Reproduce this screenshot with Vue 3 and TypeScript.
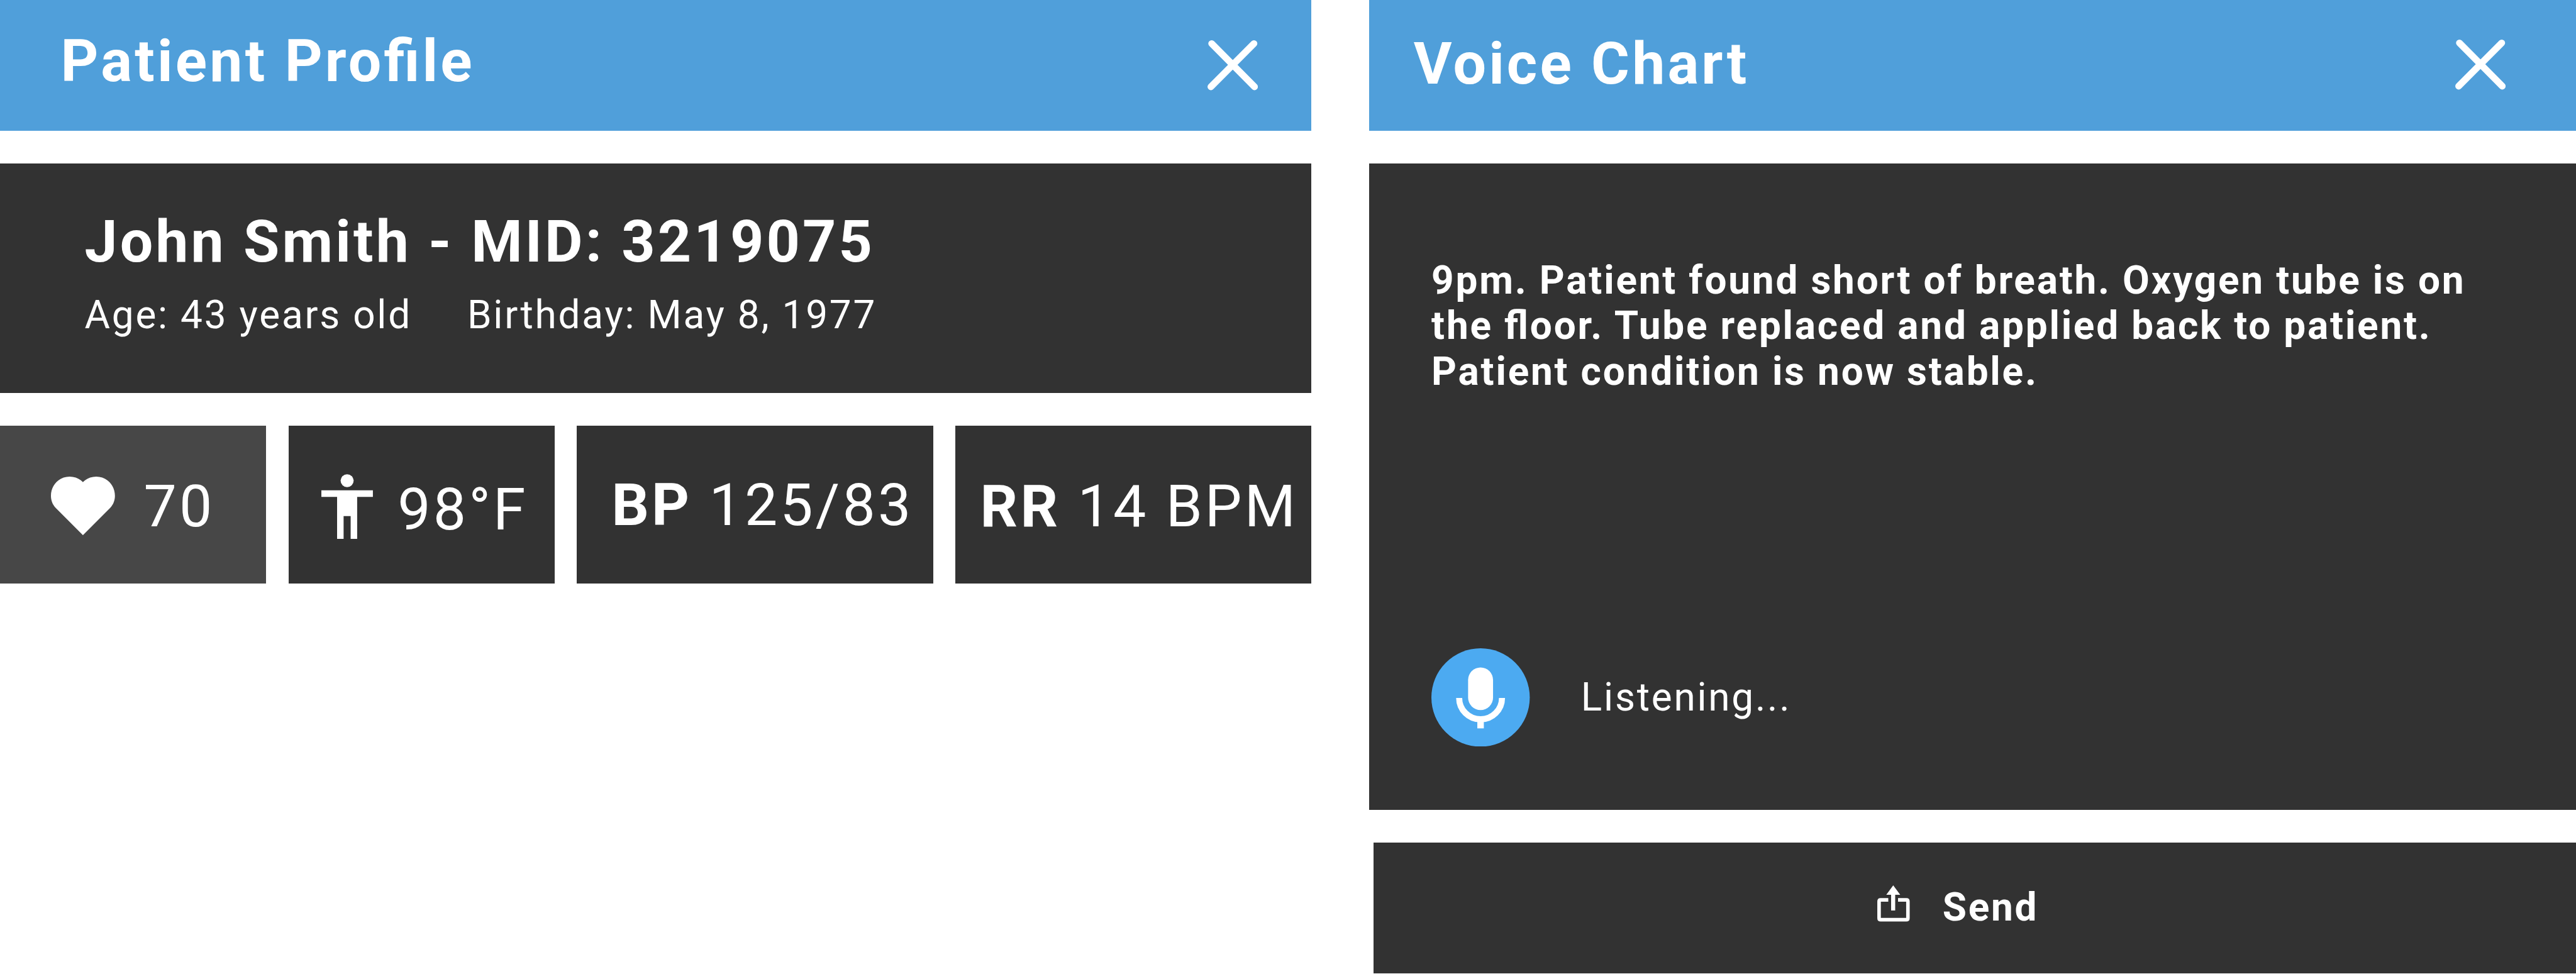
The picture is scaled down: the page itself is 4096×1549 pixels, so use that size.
<script setup lang="ts">
interface Vital {
  id: string
  label?: string
  value: string
}

const patient = {
  name: 'John Smith',
  mid: '3219075',
  age: '43 years old',
  birthday: 'May 8, 1977',
}

const vitals: Vital[] = [
  { id: 'heart', value: '70' },
  { id: 'temp', value: '98°F' },
  { id: 'bp', label: 'BP', value: '125/83' },
  { id: 'rr', label: 'RR', value: '14 BPM' },
]

const noteLines: string[] = [
  '9pm. Patient found short of breath. Oxygen tube is on',
  'the floor. Tube replaced and applied back to patient.',
  'Patient condition is now stable.',
]
</script>

<template>
  <main class="screen">
    <section class="panel profile">
      <header class="bar">
        <h1 class="heading">Patient Profile</h1>
        <svg class="close" viewBox="0 0 93 94">
          <path d="M7.7 7.3 86.7 87M85.7 7.3 6.3 87" />
        </svg>
      </header>

      <div class="card identity">
        <h2 class="heading">{{ patient.name }} - MID: {{ patient.mid }}</h2>
        <div class="facts">
          <span>Age: {{ patient.age }}</span>
          <span>Birthday: {{ patient.birthday }}</span>
        </div>
      </div>

      <div class="vitals">
        <div v-for="v in vitals" :key="v.id" class="vital" :class="v.id">
          <svg v-if="v.id === 'heart'" class="heart-icon" viewBox="0 0 118 108">
            <path d="M59 108 8.5 57.5C3 51.5 0 44 0 35.5 0 15.5 15 0 34.5 0 44 0 52.8 3.5 59 10.2 65.2 3.5 74 0 83.5 0 103 0 118 15.5 118 35.5 118 44 115 51.5 109.5 57.5Z" />
          </svg>
          <svg v-else-if="v.id === 'temp'" class="person-icon" viewBox="0 0 95 120">
            <circle cx="47.5" cy="12.2" r="12" />
            <path d="M0 29.8H95V42H66V119.6H54V77.5H41V119.6H29V42H0Z" />
          </svg>
          <span class="reading"><b v-if="v.label">{{ v.label }}&nbsp;</b>{{ v.value }}</span>
        </div>
      </div>
    </section>

    <section class="panel voice">
      <header class="bar">
        <h1 class="heading">Voice Chart</h1>
        <svg class="close" viewBox="0 0 93 94">
          <path d="M7.7 7.3 86.7 87M85.7 7.3 6.3 87" />
        </svg>
      </header>

      <div class="card chart">
        <p class="note">
          <span v-for="line in noteLines" :key="line">{{ line }}</span>
        </p>
        <div class="listen">
          <svg class="mic" viewBox="0 0 181.4 181.4">
            <circle class="disc" cx="90.7" cy="90.7" r="90.7" />
            <rect x="67.7" y="35.3" width="46" height="78.7" rx="23" />
            <path class="cradle" d="M51.2 91.5a39.5 39.5 0 0 0 79 0" />
            <rect x="84.7" y="130" width="12" height="17.7" />
          </svg>
          <span>Listening...</span>
        </div>
      </div>

      <button class="send" type="button">
        <svg class="share" viewBox="0 0 60 67">
          <path class="tray" d="M20.3 26.8H6.2Q3.3 26.8 3.3 29.7V60.5Q3.3 63.4 6.2 63.4H53.6Q56.5 63.4 56.5 60.5V29.7Q56.5 26.8 53.6 26.8H38.3" />
          <path d="M29.4 0 42.3 17.5H33V46.3H25.5V17.5H16.6Z" />
        </svg>
        <span>Send</span>
      </button>
    </section>
  </main>
</template>

<style>
body {
  margin: 0;
  background: #fff;
}
</style>

<style scoped>
.screen {
  --u: 0.86232px;
  display: flex;
  justify-content: space-between;
  width: calc(4750 * var(--u));
  height: 1549px;
  overflow: hidden;
  color: #fff;
  font-family: Roboto, sans-serif;
  font-size: calc(72 * var(--u));
  line-height: calc(84 * var(--u));
  letter-spacing: calc(3.2 * var(--u));
  font-feature-settings: "liga" 1;
  white-space: nowrap;
}

.panel {
  display: flex;
  flex-direction: column;
}

.profile {
  width: calc(2418 * var(--u));
}

.voice {
  width: calc(2225 * var(--u));
}

.bar {
  display: flex;
  flex: none;
  justify-content: space-between;
  align-items: flex-start;
  box-sizing: border-box;
  height: calc(240.7 * var(--u));
  margin-bottom: calc(61 * var(--u));
  background: #509fda;
}

.heading {
  margin: 0;
  font-size: calc(108 * var(--u));
  line-height: calc(126 * var(--u));
  font-weight: 700;
  letter-spacing: calc(4.75 * var(--u));
}

.profile .bar {
  padding: calc(50.6 * var(--u)) calc(99 * var(--u)) 0 calc(112 * var(--u));
}

.profile .bar .heading {
  letter-spacing: calc(4.84 * var(--u));
}

.voice .bar {
  padding: calc(55.6 * var(--u)) calc(130 * var(--u)) 0 calc(81.5 * var(--u));
}

.close {
  width: calc(93 * var(--u));
  height: calc(94 * var(--u));
  margin-top: calc(22.4 * var(--u));
  fill: none;
  stroke: #fff;
  stroke-width: 12.5;
  stroke-linecap: round;
}

.voice .close {
  margin-top: calc(16.4 * var(--u));
}

.card {
  flex: none;
  box-sizing: border-box;
  background: #323232;
}

.identity {
  height: calc(422.6 * var(--u));
  margin-bottom: calc(61.1 * var(--u));
  padding: calc(81.9 * var(--u)) 0 0 calc(156 * var(--u));
}

.facts {
  display: flex;
  gap: calc(102 * var(--u));
  margin-top: calc(29.6 * var(--u));
}

.vitals {
  display: grid;
  grid-template-columns: 491fr 491fr 656.5fr 656.5fr;
  column-gap: calc(41 * var(--u));
  height: calc(290.4 * var(--u));
}

.vital {
  display: flex;
  align-items: flex-start;
  background: #323232;
}

.vital svg {
  flex: none;
  fill: #fff;
}

.reading {
  font-size: calc(108 * var(--u));
  line-height: calc(126 * var(--u));
  letter-spacing: calc(4.8 * var(--u));
  margin-top: calc(87.2 * var(--u));
}

.reading b {
  font-weight: 700;
}

.heart {
  background: #474747;
}

.heart-icon {
  width: calc(118 * var(--u));
  height: calc(108 * var(--u));
  margin: calc(93.7 * var(--u)) calc(53.2 * var(--u)) 0 calc(93.8 * var(--u));
}

.person-icon {
  width: calc(95 * var(--u));
  height: calc(120 * var(--u));
  margin: calc(88.5 * var(--u)) calc(45.5 * var(--u)) 0 calc(60.7 * var(--u));
}

.temp .reading {
  margin-top: calc(92.6 * var(--u));
}

.bp .reading {
  margin: calc(84.9 * var(--u)) 0 0 calc(63.7 * var(--u));
}

.rr .reading {
  margin-left: calc(46 * var(--u));
}

.chart {
  height: calc(1191.6 * var(--u));
  margin-bottom: calc(61 * var(--u));
  padding: calc(173.6 * var(--u)) 0 0 calc(114.5 * var(--u));
}

.note {
  display: flex;
  flex-direction: column;
  margin: 0 0 calc(468 * var(--u));
  font-weight: 700;
  letter-spacing: calc(3.25 * var(--u));
}

.listen {
  display: flex;
  align-items: center;
  gap: calc(94.3 * var(--u));
}

.mic {
  width: calc(181.4 * var(--u));
  height: calc(181.4 * var(--u));
  fill: #fff;
}

.disc {
  fill: #4caaf1;
}

.cradle {
  fill: none;
  stroke: #fff;
  stroke-width: 11.2;
}

.send {
  display: flex;
  flex: none;
  align-items: flex-start;
  gap: calc(60 * var(--u));
  box-sizing: border-box;
  height: calc(241 * var(--u));
  margin: 0 0 0 calc(7.7 * var(--u));
  padding: calc(76.9 * var(--u)) 0 0 calc(929.3 * var(--u));
  border: 0;
  background: #323232;
  color: inherit;
  font: inherit;
  font-weight: 700;
  letter-spacing: inherit;
  font-feature-settings: inherit;
}

.share {
  width: calc(60 * var(--u));
  height: calc(67 * var(--u));
  margin-top: calc(1.5 * var(--u));
  fill: #fff;
}

.tray {
  fill: none;
  stroke: #fff;
  stroke-width: 6.5;
}
</style>
